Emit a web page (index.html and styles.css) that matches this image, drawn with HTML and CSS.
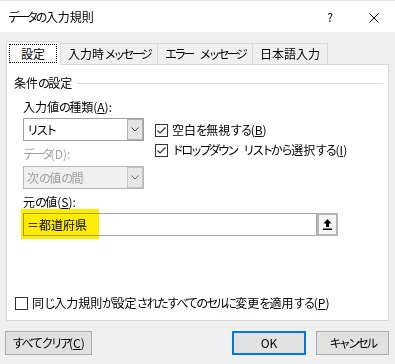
FILE: index.html
```html
<!DOCTYPE html>
<html lang="ja">
<head>
<meta charset="utf-8">
<title>データの入力規則</title>
<link rel="stylesheet" href="styles.css">
</head>
<body>
<div class="dialog">
  <div class="titlebar">
    <span class="title"><span class="kk">データ</span><span class="kn">の</span>入力規則</span>
    <span class="help">?</span>
    <span class="close"><svg width="10" height="10" viewBox="0 0 10 10"><path d="M0.5 0.5L9.5 9.5M9.5 0.5L0.5 9.5" stroke="#000" stroke-width="1" fill="none"/></svg></span>
  </div>
  <div class="tabs">
    <div class="tab active"><span class="focus">設定</span></div>
    <div class="tab t2">入力時<span class="kk">メッセージ</span></div>
    <div class="tab t3"><span class="kk">エラー</span>&nbsp;<span class="kk sp">メッセージ</span></div>
    <div class="tab t4">日本語入力</div>
  </div>
  <div class="panel">
    <div class="group-head"><span>条件<span class="kn">の</span>設定</span><span class="rule"></span></div>
    <div class="cond">
      <div class="left">
        <div class="label l1">入力値<span class="kn">の</span>種類(<u>A</u>):</div>
        <div class="combo">
          <span class="val"><span class="kk">リスト</span></span>
          <span class="drop"><svg width="8" height="5" viewBox="0 0 8 5"><path d="M0.5 0.5L4 4L7.5 0.5" stroke="#444" stroke-width="1" fill="none"/></svg></span>
        </div>
        <div class="label l2 disabled"><span class="kk">データ</span>(D):</div>
        <div class="combo off">
          <span class="val">次<span class="kn">の</span>値<span class="kn">の</span>間</span>
          <span class="drop"><svg width="8" height="5" viewBox="0 0 8 5"><path d="M0.5 0.5L4 4L7.5 0.5" stroke="#666" stroke-width="1" fill="none"/></svg></span>
        </div>
      </div>
      <div class="right">
        <div class="check">
          <svg class="box" width="13" height="13" viewBox="0 0 13 13"><rect x="0.5" y="0.5" width="12" height="12" fill="#fff" stroke="#333"/><path d="M2.5 6.5L5 9L10.5 3.5" stroke="#333" stroke-width="1.2" fill="none"/></svg>
          <span>空白<span class="kn">を</span>無視<span class="kn">する</span>(<u>B</u>)</span>
        </div>
        <div class="check">
          <svg class="box" width="13" height="13" viewBox="0 0 13 13"><rect x="0.5" y="0.5" width="12" height="12" fill="#fff" stroke="#333"/><path d="M2.5 6.5L5 9L10.5 3.5" stroke="#333" stroke-width="1.2" fill="none"/></svg>
          <span><span class="kk">ドロップダウン</span>&nbsp;<span class="kk sp">リスト</span><span class="kn">から</span>選択<span class="kn">する</span>(<u>I</u>)</span>
        </div>
      </div>
    </div>
    <div class="label l3">元<span class="kn">の</span>値(<u>S</u>):</div>
    <div class="source">
      <div class="input">＝都道府県</div>
      <div class="refbtn"><svg width="9" height="11" viewBox="0 0 9 11"><polygon points="4.5,0 0.5,4.5 3,4.5 3,8 6,8 6,4.5 8.5,4.5" fill="#000"/><rect x="0" y="9.5" width="9" height="1.5" fill="#000"/></svg></div>
      <div class="highlight"></div>
    </div>
    <div class="check apply">
      <svg class="box" width="13" height="13" viewBox="0 0 13 13"><rect x="0.5" y="0.5" width="12" height="12" fill="#fff" stroke="#333"/></svg>
      <span>同<span class="kn">じ</span>入力規則<span class="kn">が</span>設定<span class="kn">されたすべての</span><span class="kk">セル</span><span class="kn">に</span>変更<span class="kn">を</span>適用<span class="kn">する</span>(<u>P</u>)</span>
    </div>
  </div>
  <div class="footer">
    <button class="btn clear"><span class="kn">すべて</span><span class="kk">クリア</span>(<u>C</u>)</button>
    <button class="btn ok">OK</button>
    <button class="btn cancel"><span class="kk">キャンセル</span></button>
  </div>
</div>
</body>
</html>
```

FILE: styles.css
```css
* { box-sizing: border-box; }

body {
  margin: 0;
  width: 395px;
  height: 364px;
  overflow: hidden;
  background: #f0f0f0;
  font-family: "Noto Sans CJK JP", "Noto Sans", sans-serif;
  font-size: 12px;
  line-height: 16px;
  color: #000;
}

.kn { letter-spacing: -1.8px; }
.kk { letter-spacing: -2.8px; }
.sp { margin-left: 4px; }

u { text-decoration: underline; text-underline-offset: 1px; }

.dialog { width: 395px; height: 364px; }

.titlebar {
  height: 32px;
  background: #fff;
  border-top: 1px solid #e4e4e4;
  display: flex;
  align-items: center;
}
.title { padding-left: 8px; flex: 1; }
.help { margin-right: 36px; }
.close { display: flex; padding-right: 16px; padding-top: 2px; }

.tabs {
  margin-top: 9px;
  padding-left: 6px;
  display: flex;
  align-items: flex-end;
  height: 23px;
}
.tab {
  height: 21px;
  border: 1px solid #d9d9d9;
  border-bottom: none;
  background: #f0f0f0;
  margin-left: -1px;
  display: flex;
  align-items: center;
  justify-content: center;
  white-space: nowrap;
}
.tab.active {
  margin-left: 0;
  width: 55px;
  height: 24px;
  margin-bottom: -1px;
  background: #fff;
  position: relative;
  z-index: 1;
  padding: 2px 3px 2px 2px;
  align-items: stretch;
}
.focus {
  flex: 1;
  border: 1px dotted #000;
  display: flex;
  align-items: center;
  justify-content: center;
}
.t2 { width: 98px; }
.t3 { width: 96px; }
.t4 { width: 76px; }

.panel {
  margin-left: 6px;
  width: 383px;
  height: 257px;
  background: #fff;
  border: 1px solid #d9d9d9;
}

.group-head {
  margin-top: 10px;
  padding-left: 7px;
  display: flex;
  align-items: center;
}
.rule {
  flex: 1;
  height: 1px;
  background: #dcdcdc;
  margin: 1px 5px 0 5px;
}

.cond { display: flex; align-items: flex-start; margin-top: 8px; }
.left { margin-left: 16px; width: 121px; }
.right { margin-left: 11px; padding-top: 23px; display: flex; flex-direction: column; gap: 4px; }

.label { white-space: nowrap; }
.l3 { margin-left: 16px; margin-top: 5px; }
.disabled { color: #a0a0a0; }
.l2 { margin-top: 5px; }

.combo {
  margin-top: 3px;
  height: 23px;
  border: 1px solid #a0a0a0;
  background: #fff;
  display: flex;
}
.combo.off { margin-top: 4px; background: #f0f0f0; border-color: #b8b8b8; color: #a0a0a0; }
.val { flex: 1; padding-left: 3px; display: flex; align-items: center; }
.drop {
  width: 16px;
  background: #e5e5e5;
  border: 1px solid #b2b2b2;
  display: flex;
  align-items: center;
  justify-content: center;
}
.combo.off .drop { background: #e8e8e8; border-color: #c4c4c4; }

.check { display: flex; align-items: center; gap: 4px; height: 16px; white-space: nowrap; }
.box { flex: none; }

.source {
  position: relative;
  margin-top: 3px;
  margin-left: 16px;
  display: flex;
  height: 23px;
}
.input {
  width: 294px;
  border: 1px solid #a8a8a8;
  display: flex;
  align-items: center;
  padding-left: 3px;
  background: #fff;
}
.refbtn {
  width: 21px;
  border: 2px solid #b4b4b4;
  background: #f6f6f6;
  display: flex;
  align-items: center;
  justify-content: center;
}
.highlight {
  position: absolute;
  left: -2px;
  top: -4px;
  width: 78px;
  height: 30px;
  background: #ffec00;
  mix-blend-mode: multiply;
}

.apply { margin-top: 59px; padding-left: 8px; }

.footer {
  margin-top: 10px;
  display: flex;
  padding-left: 5px;
  padding-right: 6px;
}
.btn {
  font: inherit;
  color: #000;
  height: 24px;
  background: #e1e1e1;
  border: 1px solid #adadad;
  padding: 0;
  margin: 0;
  display: flex;
  align-items: center;
  justify-content: center;
}
.clear { width: 87px; }
.ok { width: 74px; margin-left: auto; border: 2px solid #0078d7; }
.cancel { width: 73px; margin-left: 10px; }
```
